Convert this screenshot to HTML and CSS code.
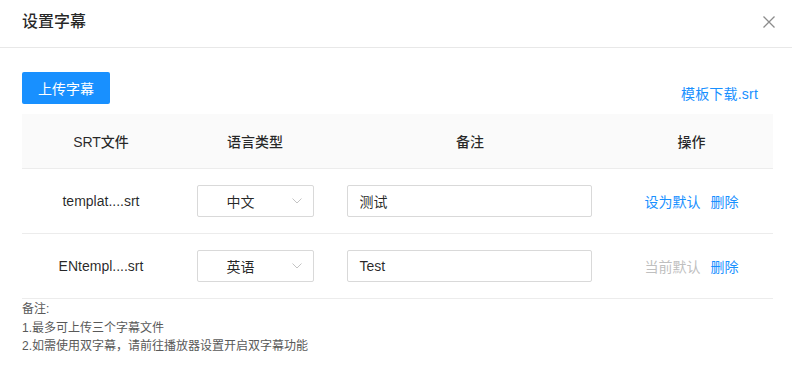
FILE: index.html
```html
<!DOCTYPE html>
<html lang="zh-CN">
<head>
<meta charset="utf-8">
<title>设置字幕</title>
<link rel="stylesheet" href="styles.css">
</head>
<body>
<div class="modal">
  <div class="modal-header">
    <div class="modal-title">设置字幕</div>
    <span class="close" aria-label="关闭">
      <svg width="12" height="12" viewBox="0 0 12 12"><path d="M0.5 0.5 L11.5 11.5 M11.5 0.5 L0.5 11.5" stroke="#8c8c8c" stroke-width="1.3" fill="none"/></svg>
    </span>
  </div>
  <div class="modal-body">
    <div class="toolbar">
      <button class="btn-primary">上传字幕</button>
      <a class="link download">模板下载.srt</a>
    </div>
    <div class="table">
      <div class="row head">
        <div class="cell">SRT文件</div>
        <div class="cell">语言类型</div>
        <div class="cell">备注</div>
        <div class="cell">操作</div>
      </div>
      <div class="row">
        <div class="cell">templat....srt</div>
        <div class="cell">
          <div class="select"><span class="select-value">中文</span><svg class="arrow" width="10" height="6" viewBox="0 0 10 6"><path d="M0.5 0.5 L5 5 L9.5 0.5" stroke="#c4c4c4" stroke-width="1" fill="none"/></svg></div>
        </div>
        <div class="cell"><div class="input">测试</div></div>
        <div class="cell actions"><a class="link">设为默认</a><a class="link">删除</a></div>
      </div>
      <div class="row">
        <div class="cell">ENtempl....srt</div>
        <div class="cell">
          <div class="select"><span class="select-value">英语</span><svg class="arrow" width="10" height="6" viewBox="0 0 10 6"><path d="M0.5 0.5 L5 5 L9.5 0.5" stroke="#c4c4c4" stroke-width="1" fill="none"/></svg></div>
        </div>
        <div class="cell"><div class="input">Test</div></div>
        <div class="cell actions"><span class="muted">当前默认</span><a class="link">删除</a></div>
      </div>
    </div>
    <div class="notes">
      <div>备注:</div>
      <div>1.最多可上传三个字幕文件</div>
      <div>2.如需使用双字幕，请前往播放器设置开启双字幕功能</div>
    </div>
  </div>
</div>
</body>
</html>
```
FILE: styles.css
```css
* { box-sizing: border-box; }
html, body { margin: 0; padding: 0; background: #fff; }
body {
  font-family: "Liberation Sans", "Noto Sans CJK SC", sans-serif;
  font-size: 14px;
  color: rgba(0,0,0,0.85);
}
.modal { width: 792px; height: 388px; background: #fff; }
.modal-header {
  height: 48px;
  padding: 0 17px 4px 22px;
  border-bottom: 1px solid #e8e8e8;
  display: flex;
  align-items: center;
  justify-content: space-between;
}
.modal-title { font-size: 16px; font-weight: 500; line-height: 22px; color: rgba(0,0,0,0.85); }
.close { display: flex; width: 12px; height: 12px; }
.modal-body { padding: 24px 19px 0 22px; }
.toolbar { display: flex; justify-content: space-between; align-items: flex-end; }
.btn-primary {
  width: 88px; height: 32px;
  background: #1890ff; color: #fff;
  border: 0; border-radius: 2px;
  font: inherit; font-size: 14px;
  padding: 0;
}
.link { color: #1890ff; cursor: pointer; }
.download { line-height: 22px; margin-right: 15px; margin-bottom: -1px; letter-spacing: 0.2px; }
.table { margin-top: 10px; }
.row {
  display: grid;
  grid-template-columns: 158px 150px 280px 1fr;
  height: 65px;
  border-bottom: 1px solid #ececec;
  align-items: center;
}
.row.head { height: 55px; background: #fafafa; font-weight: 500; }
.cell { display: flex; justify-content: center; align-items: center; }
.select {
  width: 117px; height: 32px;
  border: 1px solid #d9d9d9; border-radius: 2px;
  display: flex; align-items: center;
  padding: 0 11px 0 11px;
  margin-left: 1px;
}
.select-value { flex: 1; text-align: center; padding-right: 20px; }
.arrow { flex: none; }
.input {
  width: 245px; height: 32px;
  border: 1px solid #d9d9d9; border-radius: 2px;
  padding: 0 12px;
  display: flex; align-items: center;
  margin-left: -2px;
}
.actions { gap: 10px; }
.muted { color: #bfbfbf; }
.notes { font-size: 12px; line-height: 18.5px; color: #595959; padding-top: 1px; }
```
